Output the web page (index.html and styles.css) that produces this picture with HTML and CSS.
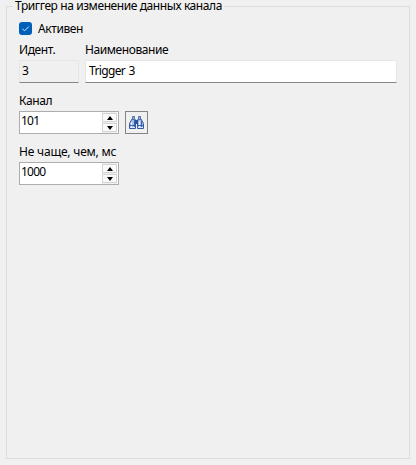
FILE: index.html
```
<!DOCTYPE html>
<html lang="ru">
<head>
<meta charset="utf-8">
<title>Триггер</title>
<link rel="stylesheet" href="styles.css">
</head>
<body>
<section class="group">
  <h1 class="legend">Триггер на изменение данных канала</h1>
  <div class="check">
    <span class="box"><svg width="13" height="13" viewBox="0 0 13 13"><path d="M3.4 6.7 5.6 8.9 9.8 4.5" fill="none" stroke="#d5e6f5" stroke-width="1"/></svg></span>
    <span>Активен</span>
  </div>
  <div class="row names">
    <div class="field ident"><label>Идент.</label><div class="input readonly">3</div></div>
    <div class="field name"><label>Наименование</label><div class="input text">Trigger 3</div></div>
  </div>
  <div class="field channel">
    <label>Канал</label>
    <div class="row pick">
      <div class="spin"><span class="num">101</span>
        <div class="arrows"><i><svg width="6" height="4" viewBox="0 0 6 4"><path d="M0 4 3 0 6 4Z"/></svg></i><i><svg width="6" height="4" viewBox="0 0 6 4"><path d="M0 0H6L3 4Z"/></svg></i></div>
      </div>
      <div class="find">
        <svg width="17" height="17" viewBox="0 0 17 17">
          <path d="M4 5H7L7.500 8V14.500H1.500V9.500zM10 5H13L15.500 9.500V14.500H9.500V8z" fill="#a3bde4" stroke="#34589f"/>
          <path d="M4.500 2.500h2v3h-2zM10.500 2.500h2v3h-2z" fill="#8ea9d4" stroke="#5574ab"/>
          <path d="M7 6h3v4H7z" fill="#2d509b"/>
          <path d="M3.500 8v5M11.500 7.500v5.500" stroke="#eef5ff"/>
          <path d="M6.500 6v8M13.500 7v7M2 11.500h5M10 11.500h5" stroke="#3d65b0"/>
          <path d="M2 13.500h5M10 13.500h5" stroke="#dbe8fa"/>
        </svg>
      </div>
    </div>
  </div>
  <div class="field period">
    <label class="wide">Не чаще, чем, мс</label>
    <div class="spin"><span class="num">1000</span>
      <div class="arrows"><i><svg width="6" height="4" viewBox="0 0 6 4"><path d="M0 4 3 0 6 4Z"/></svg></i><i><svg width="6" height="4" viewBox="0 0 6 4"><path d="M0 0H6L3 4Z"/></svg></i></div>
    </div>
  </div>
</section>
</body>
</html>
```
FILE: styles.css
```
* { box-sizing: border-box; }
body {
  margin: 0;
  height: 465px;
  padding: 6px;
  background: #f0f0f0;
  color: #000;
  font: 12px/16px "Noto Sans", "Open Sans", sans-serif;
  letter-spacing: -0.41px;
  white-space: nowrap;
}
.group {
  width: 404px;
  height: 453px;
  padding: 0 12px;
  border: 1px solid #dcdcdc;
}
.legend {
  width: max-content;
  height: 14px;
  margin: -7px 0 0 -6px;
  padding: 0 2px;
  background: #f0f0f0;
  font: inherit;
  line-height: 12px;
}
.check { display: flex; gap: 6px; height: 16px; margin-top: 7px; }
.box { width: 13px; height: 13px; margin-top: 1px; border-radius: 3px; background: #005fb8; }
svg { display: block; }
.row { display: flex; }
.names { gap: 6px; margin-top: 5px; }
.field label { display: block; height: 18px; }
.field .wide { letter-spacing: -0.2px; }
.ident { width: 60px; }
.name { width: 312px; }
.input {
  height: 23px;
  padding: 2px;
  border: 1px solid #e6e6e6;
  border-bottom-color: #868686;
  border-radius: 1px;
  background: #fff;
}
.text { padding-left: 3px; letter-spacing: -0.65px; word-spacing: 1px; }
.readonly { background: #f0f0f0; }
.channel, .period { margin-top: 10px; }
.pick { gap: 6px; }
.spin {
  display: flex;
  justify-content: space-between;
  width: 100px;
  height: 23px;
  padding: 0 1px;
  border: 1px solid #abadb3;
  background: #fff;
}
.num { padding-top: 1px; letter-spacing: -0.8px; }
.arrows { width: 15px; padding: 1px 0; background: #f0f0f0; }
.arrows i {
  display: flex;
  align-items: center;
  justify-content: center;
  height: 9px;
  margin-bottom: 1px;
  border: 1px solid #d4d4d4;
  background: #fbfbfb;
}
.find { width: 23px; height: 23px; padding: 2px; border: 1px solid #848484; background: #f0f0f0; }
```
